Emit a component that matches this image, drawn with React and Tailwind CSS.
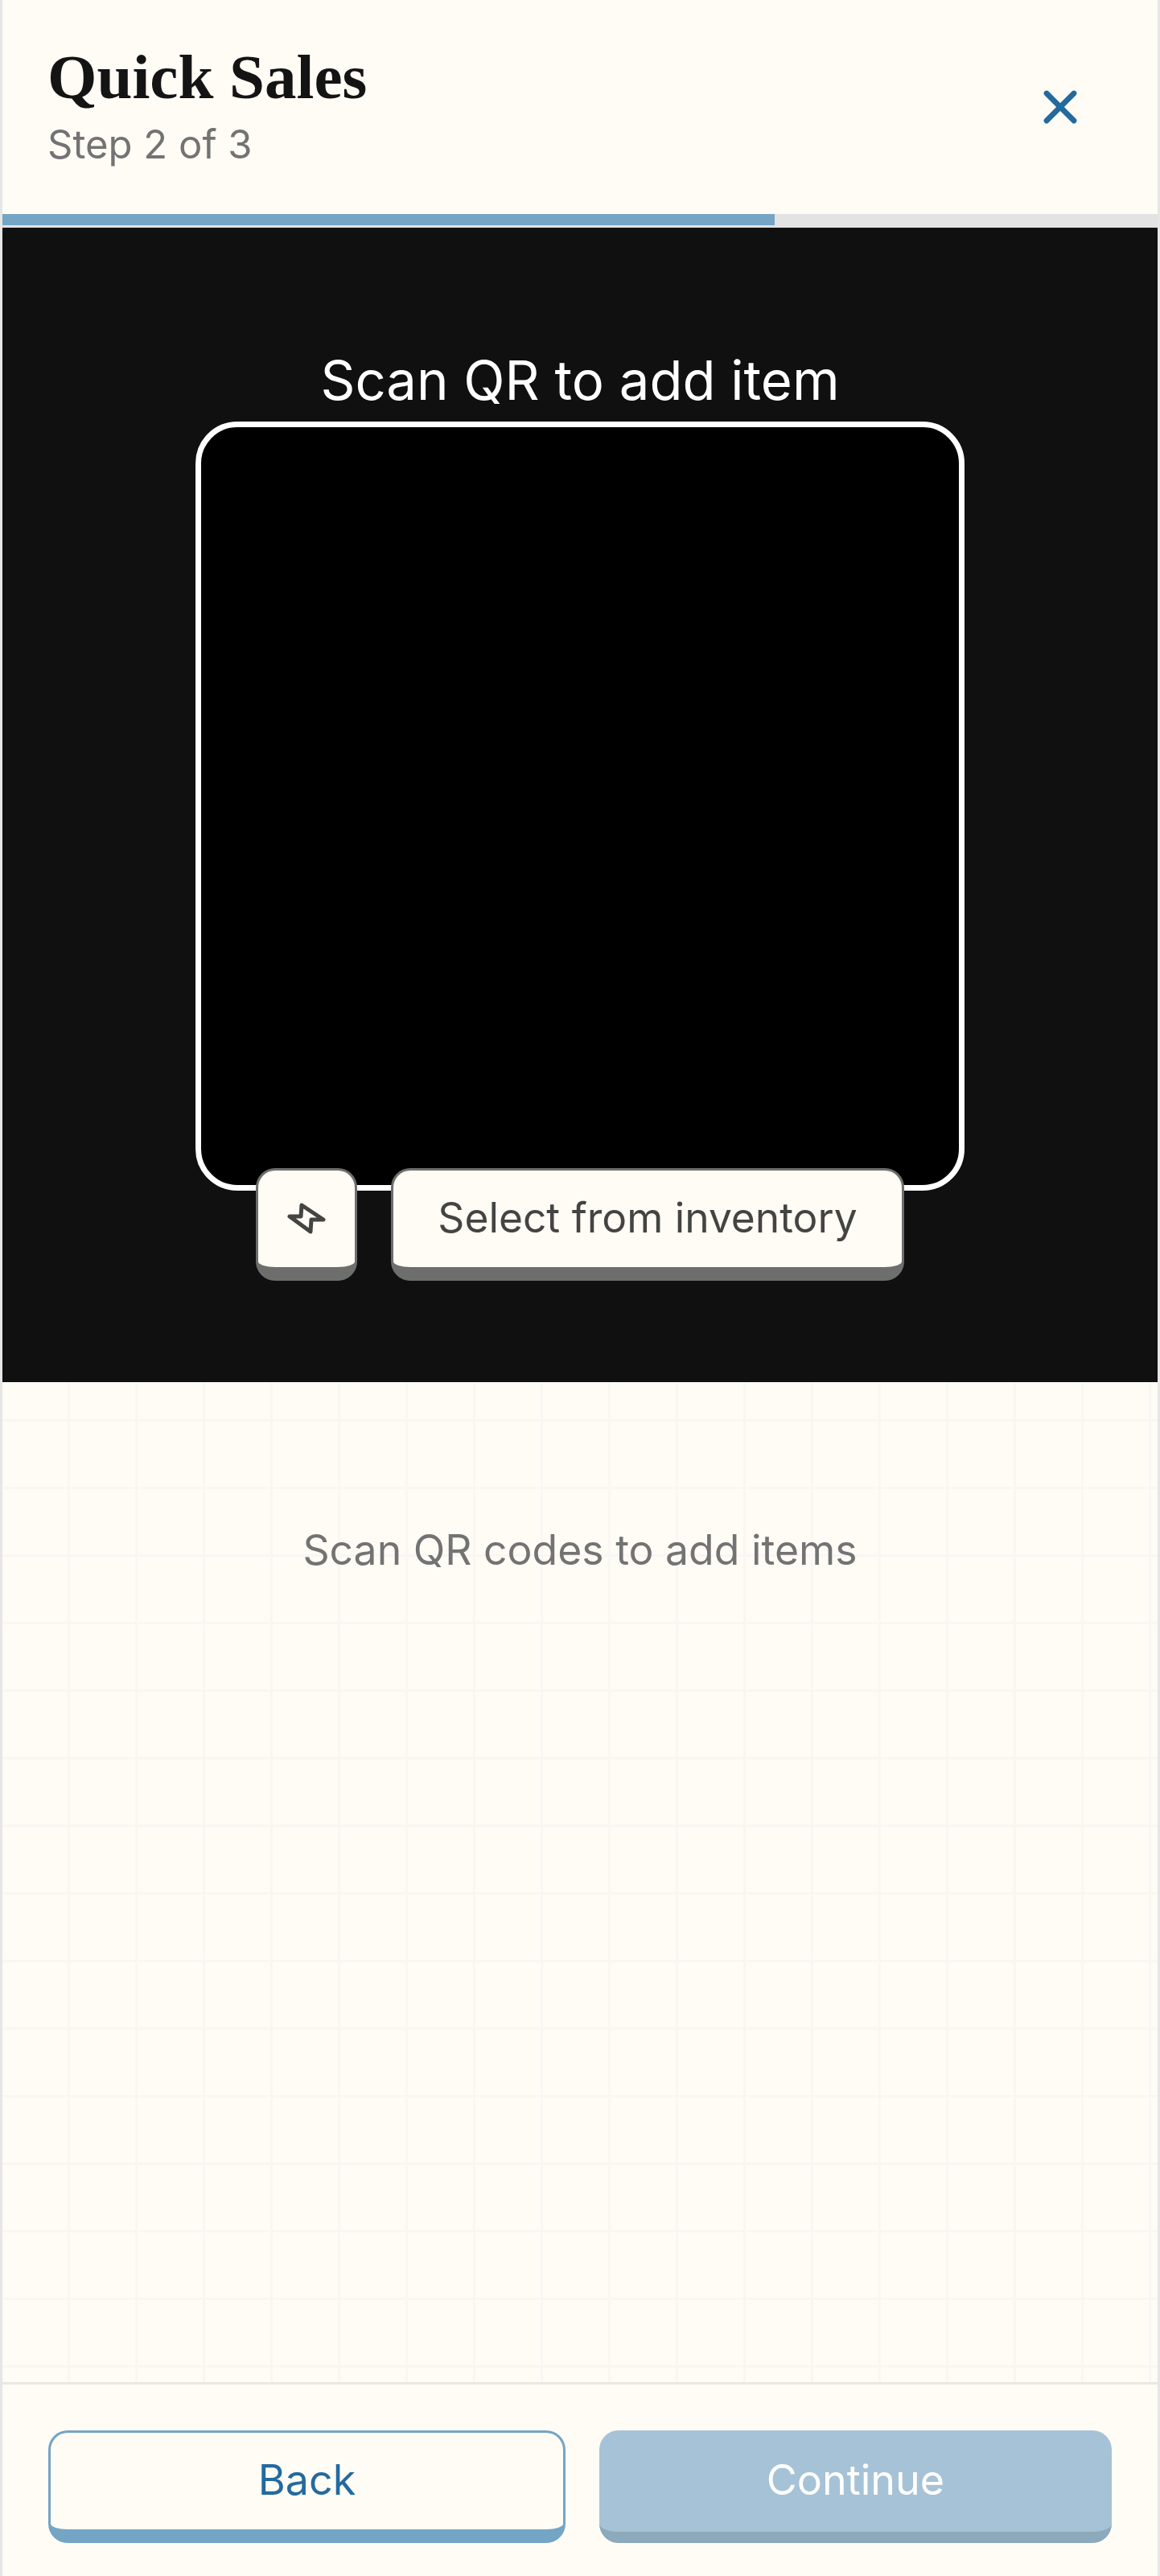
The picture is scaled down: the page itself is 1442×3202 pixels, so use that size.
import { X } from "lucide-react"

const sans = "font-['Inter','Noto_Sans',sans-serif]"

function FlashIcon() {
  return (
    <svg viewBox="0 0 48 48" className="w-12 h-12" fill="none" stroke="#444442" strokeWidth="5" strokeLinejoin="round" strokeLinecap="round">
      <path d="M3 21 L17 21 L18 7 L45 25 L30 25 L29 40 Z" />
    </svg>
  )
}

export default function App() {
  return (
    <div className={`h-[3202px] w-full flex flex-col bg-[#fffcf6] border-x-[3px] border-[#e6e6e6] ${sans}`}>
      {/* Header */}
      <div className="h-[266px] flex items-center justify-between pl-[56px] pr-[87px]">
        <div className="flex flex-col">
          <h1 className="font-['Liberation_Serif',serif] font-bold text-[79px] leading-[80px] text-[#141414]">Quick Sales</h1>
          <p className="text-[49px] leading-[60px] text-[#737373] mt-[14px]">Step 2 of 3</p>
        </div>
        <button className="text-[#246a9f]">
          <X size={68} strokeWidth={2.4} />
        </button>
      </div>

      {/* Progress */}
      <div className="h-[17px] bg-[#e3e3e3]">
        <div className="h-[14px] w-[960px] bg-[#74a5c5]" />
      </div>

      {/* Scanner */}
      <div className="h-[1435px] bg-[#101010] flex flex-col items-center pt-[148px]">
        <p className="text-[67px] leading-[84px] text-white mb-[9px]">Scan QR to add item</p>
        <div className="w-[956px] h-[956px] bg-black border-[7px] border-white rounded-[52px]" />
        <div className="flex gap-[42px] -mt-[28px]">
          <button className="w-[126px] h-[140px] flex items-center justify-center bg-[#fffcf6] border-[3px] border-b-[17px] border-[#6e6e6c] rounded-[24px]">
            <FlashIcon />
          </button>
          <button className="w-[638px] h-[140px] pb-[3px] bg-[#fffcf6] border-[3px] border-b-[17px] border-[#6e6e6c] rounded-[24px] text-[51.5px] text-[#444442]">
            Select from inventory
          </button>
        </div>
      </div>

      {/* Empty cart */}
      <div className="flex-1 bg-[linear-gradient(to_right,#f8f7f3_3px,transparent_3px),linear-gradient(to_bottom,#f8f7f3_3px,transparent_3px)] bg-[size:84px_84px] bg-[position:81px_46px] flex justify-center pt-[175px]">
        <p className="text-[51.7px] leading-[66px] text-[#737373]">Scan QR codes to add items</p>
      </div>

      {/* Footer */}
      <div className="h-[241px] border-t-[3px] border-[#e9e8e4] flex gap-[42px] pl-[57px] pr-[57px] pt-[57px]">
        <button className="flex-1 h-[140px] pb-[3px] bg-[#fffcf6] border-[3px] border-b-[17px] border-[#74a5c5] rounded-[24px] text-[52px] text-[#246a9f]">
          Back
        </button>
        <button className="flex-1 h-[140px] pb-[3px] bg-[#a6c2d6] border-b-[14px] border-[#8da9bc] rounded-[24px] text-[52px] text-white">
          Continue
        </button>
      </div>
    </div>
  )
}
